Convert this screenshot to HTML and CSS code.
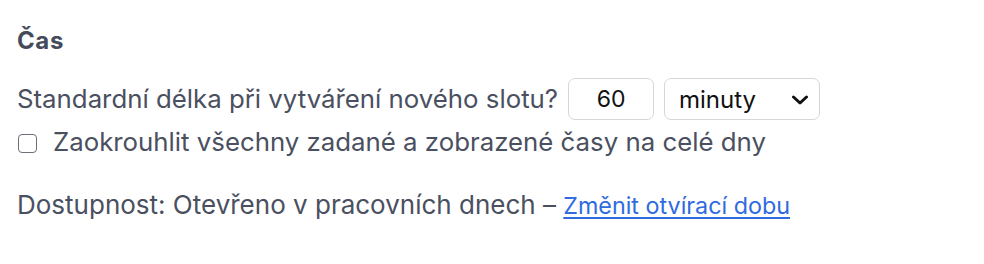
FILE: index.html
```html
<!DOCTYPE html>
<html lang="cs">
<head>
<meta charset="utf-8">
<link rel="stylesheet" href="styles.css">
</head>
<body>
<section class="panel">
  <h2 class="title">Čas</h2>
  <div class="row row-length">
    <label class="label" for="len">Standardní délka při vytváření nového slotu?</label>
    <input id="len" class="num" type="text" value="60">
    <div class="select">
      <span class="select-text">minuty</span>
      <svg class="chev" viewBox="0 0 18 10" width="18" height="10"><path d="M2.5 2l6.5 6 6.5-6" fill="none" stroke="#111" stroke-width="3" stroke-linecap="round" stroke-linejoin="round"/></svg>
    </div>
  </div>
  <div class="row row-check">
    <span class="checkbox"></span>
    <span class="label">Zaokrouhlit všechny zadané a zobrazené časy na celé dny</span>
  </div>
  <p class="avail">Dostupnost: Otevřeno v pracovních dnech – <a class="link" href="#">Změnit otvírací dobu</a></p>
</section>
</body>
</html>
```
FILE: styles.css
```css
html, body {
  margin: 0;
  padding: 0;
  background: #ffffff;
}
body {
  font-family: Inter, "Liberation Sans", Arial, sans-serif;
  color: #4a5060;
}
.panel {
  padding: 27px 17px 0 17px;
}
.title {
  margin: 0;
  font-size: 24px;
  font-weight: bold;
  letter-spacing: 0.6px;
  line-height: 28px;
  color: #454b5a;
}
.row {
  display: flex;
  align-items: center;
}
.row-length {
  margin-top: 23px;
  height: 42px;
}
.label {
  font-size: 25.8px;
  line-height: 30px;
}
.num {
  box-sizing: border-box;
  width: 86px;
  height: 42px;
  margin-left: 10px;
  border: 1px solid #d4d6da;
  border-radius: 7px;
  font-family: Inter, "Liberation Sans", Arial, sans-serif;
  font-size: 23px;
  color: #111;
  text-align: center;
  padding: 0;
  outline: none;
}
.select {
  box-sizing: border-box;
  width: 156px;
  height: 42px;
  margin-left: 10px;
  border: 1px solid #d4d6da;
  border-radius: 7px;
  display: flex;
  align-items: center;
  justify-content: space-between;
  padding: 0 10px 0 14px;
  font-size: 24px;
  color: #111;
}
.chev {
  display: block;
  margin-top: 1px;
}
.row-check {
  margin-top: 3px;
  height: 38px;
}
.checkbox {
  box-sizing: border-box;
  width: 19px;
  height: 19px;
  border: 1.5px solid #6b6f78;
  border-radius: 4px;
  margin: 2px 16px 0 1px;
  background: #fff;
}
.avail {
  margin: 29px 0 0 0;
  font-size: 26px;
  line-height: 30px;
}
.link {
  color: #2f6ae0;
  font-size: 23.3px;
  text-decoration: underline;
  text-underline-offset: 3px;
}
```
